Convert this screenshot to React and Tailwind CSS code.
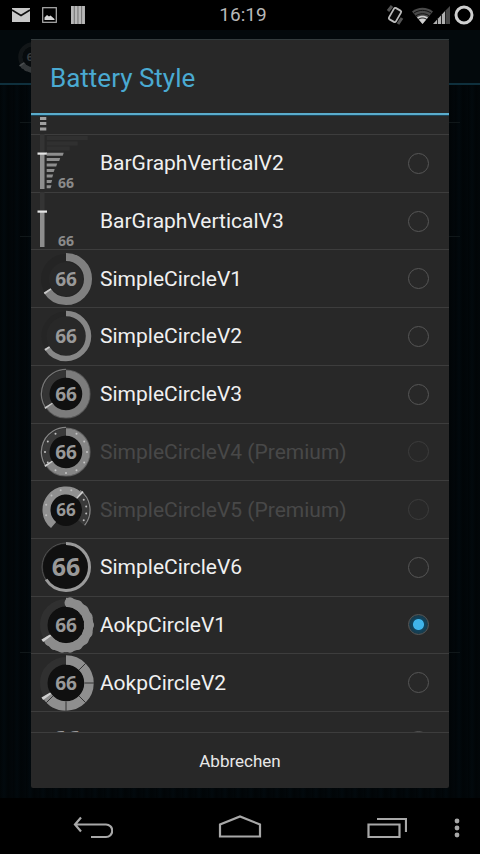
import React, { useState } from "react";

const Arc = ({ r, w, from = 0, length = 66, color = "#868686" }) => (
  <circle
    cx="30"
    cy="29"
    r={r}
    fill="none"
    stroke={color}
    strokeWidth={w}
    pathLength="100"
    strokeDasharray={`${length} ${100 - length}`}
    transform={`rotate(${from * 3.6 - 90} 30 29)`}
  />
);

const Level = ({ size = 19, x = 30, y = 36, color = "#999999" }) => (
  <text
    x={x}
    y={y}
    textAnchor="middle"
    fontSize={size}
    fontWeight="700"
    fill={color}
    fontFamily='"Open Sans", "Noto Sans", sans-serif'
  >
    66
  </text>
);

// Point on a circle round the icon centre, degrees clockwise from the top
const polar = (deg, r) => {
  const a = (deg * Math.PI) / 180;
  return { x: 30 + r * Math.sin(a), y: 29 - r * Math.cos(a) };
};

const Dots = ({ degrees, r, color }) =>
  degrees.map((deg) => {
    const p = polar(deg, r);
    return <circle key={deg} cx={p.x} cy={p.y} r="1" fill={color} />;
  });

const Stem = () => (
  <>
    <rect x="4" y="0" width="4.5" height="19" fill="#343434" />
    <rect x="4" y="20" width="4.5" height="35" fill="#8e8e8e" />
    <rect x="1.5" y="18.5" width="9.5" height="2.2" fill="#e6e6e6" />
  </>
);

const icons = {
  barV1: (
    <>
      {[41, 46, 51.5].map((y) => (
        <rect key={y} x="4" y={y} width="6.3" height="3" fill="#a0a0a0" />
      ))}
    </>
  ),
  barV2: (
    <>
      <Stem />
      {[
        [2, 41],
        [7.5, 31],
        [12.5, 23],
      ].map(([y, width]) => (
        <rect key={y} x="10.7" y={y} width={width} height="4" fill="#303030" />
      ))}
      {[
        [18.7, 17],
        [24, 13.5],
        [29.5, 10.5],
        [35, 8],
        [40.5, 6.5],
        [46, 5.5],
        [51.2, 4.8],
      ].map(([y, width]) => (
        <path
          key={y}
          d={`M10.7 ${y}h${width}l-1 3h${1 - width}z`}
          fill="#8e8e8e"
        />
      ))}
      <Level size={14} y={54} color="#8a8a8a" />
    </>
  ),
  barV3: (
    <>
      <Stem />
      <Level size={14} y={54} color="#8a8a8a" />
    </>
  ),
  simpleV1: (
    <>
      <Arc r={21} w={8} length={100} color="#242424" />
      <Arc r={22} w={8} color="#808080" />
      <Arc r={22} w={8} from={65} length={1.4} color="#c8c8c8" />
      <Level />
    </>
  ),
  simpleV2: (
    <>
      <Arc r={22} w={5} length={100} color="#252525" />
      <Arc r={22.5} w={5.5} />
      <Arc r={22.5} w={5.5} from={65} length={1.4} color="#c8c8c8" />
      <Level />
    </>
  ),
  simpleV3: (
    <>
      <Arc r={24} w={1.2} color="#555555" />
      <circle cx="30" cy="29" r="17" fill="#101010" />
      <Arc r={20} w={7} from={66} length={34} color="#343434" />
      <Arc r={24.6} w={1.3} from={66} length={34} color="#757575" />
      <Arc r={20} w={7.5} color="#7c7c7c" />
      <Arc r={21} w={9} from={65} length={1.2} color="#c8c8c8" />
      <Level />
    </>
  ),
  simpleV4: (
    <>
      <Arc r={24} w={1.2} color="#5d5d5d" />
      <circle cx="30" cy="29" r="17" fill="#101010" />
      <Arc r={20} w={7} from={66} length={34} color="#3a3a3a" />
      <Arc r={24.6} w={1.3} from={66} length={34} color="#858585" />
      <Arc r={20} w={7.5} color="#858585" />
      <Arc r={21} w={9} from={65} length={1.2} color="#d0d0d0" />
      <Dots
        degrees={[30, 60, 90, 120, 150, 180, 210, 240, 270, 300, 330]}
        r={21}
        color="#c4c4c4"
      />
      <Level />
    </>
  ),
  simpleV5: (
    <>
      <circle cx="30" cy="29" r="16" fill="#101010" />
      <Arc r={19.5} w={8} from={61} length={51} color="#909090" />
      <Arc r={24} w={1.3} from={10} length={26} color="#858585" />
      <Arc r={19.5} w={7} from={12} length={24} color="#3a3a3a" />
      <Arc r={20.5} w={9} from={11.3} length={1.2} color="#d0d0d0" />
      <Dots
        degrees={[-105, -75, -45, -15, 15, 60, 80, 100, 120]}
        r={20.5}
        color="#bdbdbd"
      />
      <Level size={17} y={35} />
    </>
  ),
  simpleV6: (
    <>
      <circle cx="30" cy="29" r="23" fill="#101010" />
      <Arc r={24} w={1} length={100} color="#505050" />
      <Arc r={23.5} w={3} color="#9a9a9a" />
      <Level size={25} y={38} />
    </>
  ),
  aokpV1: (
    <>
      <Arc r={22} w={8} length={100} color="#303030" />
      <circle cx="30" cy="29" r="18.5" fill="#101010" />
      <Arc r={22.8} w={9} color="#8c8c8c" />
      {[10, 30, 50, 70, 90, 110, 130, 150, 170, 190, 210, 226].map((deg) => {
        const p = polar(deg, 22.6);
        return <circle key={deg} cx={p.x} cy={p.y} r="5.4" fill="#8c8c8c" />;
      })}
      <circle cx="30" cy="29" r="18" fill="#101010" />
      <Arc r={23.5} w={10} from={64.8} length={1.8} color="#d0d0d0" />
      <Level />
    </>
  ),
  aokpV2: (
    <>
      <Arc r={22} w={8} length={100} color="#303030" />
      <circle cx="30" cy="29" r="18.5" fill="#101010" />
      <Arc r={23} w={9.5} color="#8f8f8f" />
      {[45, 90, 135, 180, 225].map((deg) => {
        const a = polar(deg, 18.5);
        const b = polar(deg, 28);
        return (
          <line
            key={deg}
            x1={a.x}
            y1={a.y}
            x2={b.x}
            y2={b.y}
            stroke="#333333"
            strokeWidth="1"
          />
        );
      })}
      <Arc r={23.5} w={10} from={64.8} length={1.8} color="#d0d0d0" />
      <Level />
    </>
  ),
  aokpV3: <Level size={25} y={37} />,
};

const styles = [
  { id: "barV2", name: "BarGraphVerticalV2" },
  { id: "barV3", name: "BarGraphVerticalV3" },
  { id: "simpleV1", name: "SimpleCircleV1" },
  { id: "simpleV2", name: "SimpleCircleV2" },
  { id: "simpleV3", name: "SimpleCircleV3" },
  { id: "simpleV4", name: "SimpleCircleV4 (Premium)", premium: true },
  { id: "simpleV5", name: "SimpleCircleV5 (Premium)", premium: true },
  { id: "simpleV6", name: "SimpleCircleV6" },
  { id: "aokpV1", name: "AokpCircleV1" },
  { id: "aokpV2", name: "AokpCircleV2" },
];

const StyleRow = ({ item, selected, onSelect }) => (
  <label
    className={`flex w-full shrink-0 items-center pl-[5px] pr-5 ${
      item.premium ? "text-[#484848]" : "text-[#f0f0f0]"
    }`}
  >
    <svg width="60" height="58" viewBox="0 0 60 58" className="shrink-0">
      {icons[item.id]}
    </svg>
    <span className="ml-1 flex-1 whitespace-nowrap text-[21px] leading-7">
      {item.name}
    </span>
    <input
      type="radio"
      name="battery-style"
      value={item.id}
      checked={selected === item.id}
      disabled={item.premium}
      onChange={() => onSelect(item.id)}
      className="size-[21px] shrink-0 appearance-none rounded-full border border-[#565656] checked:bg-[radial-gradient(circle,#3fb4ea_5px,#10445e_6px,#1c3946_10px)] disabled:border-[#3c3c3c]"
    />
  </label>
);

const StatusBar = () => (
  <header className="grid h-[30px] shrink-0 grid-cols-[1fr_auto_1fr] items-center bg-black pl-3 pr-1.5 text-[#b8b8b8]">
    <div className="flex items-center gap-3">
      <svg width="18" height="14" viewBox="0 0 18 14">
        <rect width="18" height="14" fill="#c8c8c8" />
        <path d="M0 2l9 5.5L18 2" fill="none" stroke="#111" strokeWidth="1.6" />
      </svg>
      <svg width="15" height="16" viewBox="0 0 15 16">
        <rect x=".7" y=".7" width="13.6" height="14.6" fill="none" stroke="#b0b0b0" strokeWidth="1.2" />
        <path d="M2.5 13V10.5l2.5-2.5 2 1.5 1.5-1 4 3.5V13z" fill="#d8d8d8" />
      </svg>
      <svg width="14" height="18" viewBox="0 0 14 18" className="ml-0.5">
        <path d="M0 0h14v18H0z" fill="#6a6a6a" />
        <path d="M0 0h2.8v18H0zM3.7 0h2.8v18H3.7zM7.4 0h2.8v18H7.4zM11.1 0h2.8v18h-2.8z" fill="#b8b8b8" />
      </svg>
    </div>
    <time className="text-[19px] leading-6">16:19</time>
    <div className="flex items-center justify-end">
      <svg width="18" height="20" viewBox="0 0 18 20" className="mr-2">
        <path d="M2 6l4-5M12 19l4-6" stroke="#555" strokeWidth="3" />
        <rect x="5" y="3.5" width="8" height="13" rx="1.5" transform="rotate(30 9 10)" fill="#0a0a0a" stroke="#bcbcbc" strokeWidth="1.8" />
      </svg>
      <svg width="21" height="17" viewBox="0 0 21 17">
        <path d="M10.5 17L0 4.5C6 -.5 15 -.5 21 4.5z" fill="#4a4a4a" />
        <path d="M10.5 17L5 10.5c3-2.5 8-2.5 11 0z" fill="#d0d0d0" />
        <path d="M2 6c5-3.500 12-3.500 17 0M3.500 9c4-3 10-3 14 0" fill="none" stroke="#111" strokeWidth="1" />
        <path d="M6 12.5c3-2 6-2 9 0" fill="none" stroke="#111" strokeWidth="1" />
      </svg>
      <svg width="17" height="18" viewBox="0 0 17 18">
        <path d="M0 18L13 4v14z" fill="#b0b0b0" />
        <path d="M13 4l4-4v18h-4z" fill="#484848" />
        <path d="M4.500 12v6M8.500 8v10M12.500 4v14" stroke="#222" strokeWidth="1" />
      </svg>
      <svg width="20" height="20" viewBox="0 0 20 20" className="ml-1">
        <circle cx="10" cy="10" r="8" fill="none" stroke="#cfcfcf" strokeWidth="3" />
      </svg>
    </div>
  </header>
);

const NavBar = () => (
  <nav className="flex h-14 shrink-0 items-center bg-black pl-[46px]">
    <div className="flex flex-1 items-center justify-between">
      <button aria-label="Back" className="flex h-14 w-[94px] items-center justify-center pt-1">
        <svg width="40" height="24" viewBox="0 0 40 24" fill="none" stroke="#a8a8a8" strokeWidth="2.2">
          <path d="M8 1.500L2 8.500l6 7M2 8.500h31a6 6 0 0 1 0 12.500H18" />
        </svg>
      </button>
      <button aria-label="Home" className="flex h-14 w-[94px] items-center justify-center pt-0.5">
        <svg width="44" height="24" viewBox="0 0 44 24" fill="none" stroke="#a8a8a8" strokeWidth="2.2">
          <path d="M2 21.500V9.500L22 1.500l20 8v12z" />
        </svg>
      </button>
      <button aria-label="Recent apps" className="flex h-14 w-[94px] items-center justify-center pt-1">
        <svg width="40" height="24" viewBox="0 0 40 24" fill="none" stroke="#a8a8a8" strokeWidth="2.2">
          <path d="M1.500 8.500h31V21h-31zM10 3h29v13" />
        </svg>
      </button>
    </div>
    <button aria-label="Menu" className="flex h-14 w-[46px] items-center justify-center pt-1">
      <svg width="6" height="22" viewBox="0 0 6 22" fill="#a8a8a8">
        <circle cx="3" cy="4" r="2.4" />
        <circle cx="3" cy="11" r="2.4" />
        <circle cx="3" cy="18" r="2.4" />
      </svg>
    </button>
  </nav>
);

const App = () => {
  const [selected, setSelected] = useState("aokpV1");

  return (
    <div className="flex h-screen min-h-[640px] flex-col bg-black font-[Roboto,sans-serif]">
      <StatusBar />

      <main className="grid min-h-0 flex-1 grid-cols-1 grid-rows-1 bg-[repeating-linear-gradient(90deg,#010507_0px,#02090d_4px,#010507_8px,#02070a_13px)]">
        {/* Dimmed settings screen */}
        <div className="col-start-1 row-start-1">
          <div className="flex h-[55px] items-center border-b-2 border-[#0f303d] bg-[#03090c] pl-4">
            <svg width="34" height="34" viewBox="0 0 60 58" opacity="0.35">
              {icons.aokpV1}
            </svg>
          </div>
          <div className="mx-5">
            <div className="h-[38px] border-b border-[#101719]" />
            <div className="h-[114px] border-b border-[#101719]" />
            <div className="h-[416px] border-b border-[#101719]" />
          </div>
        </div>

        {/* Dialog */}
        <section
          role="dialog"
          aria-labelledby="dialog-title"
          className="relative z-10 col-start-1 row-start-1 mx-[31px] mb-[10px] mt-[9px] flex min-h-0 flex-col rounded-xs bg-[#282828]"
        >
          <h1
            id="dialog-title"
            className="flex h-[74px] shrink-0 items-center border-t border-[#333b3d] px-[19px] pt-0.5 text-[26px] leading-8 text-[#4aaad2]"
          >
            Battery Style
          </h1>
          <div className="h-[3px] shrink-0 border-b border-[#1d4558] bg-[#5aaccc]" />

          <ul className="flex min-h-0 flex-1 flex-col overflow-hidden">
            <li className="flex h-[18px] shrink-0 items-end overflow-hidden">
              <StyleRow
                item={{ id: "barV1", name: "BarGraphVerticalV1" }}
                selected={selected}
                onSelect={setSelected}
              />
            </li>
            {styles.map((item) => (
              <li
                key={item.id}
                className="flex min-h-0 flex-1 items-center border-t border-[#3d3d3d]"
              >
                <StyleRow item={item} selected={selected} onSelect={setSelected} />
              </li>
            ))}
            <li className="flex h-[21px] shrink-0 items-start overflow-hidden border-t border-[#3d3d3d]">
              <StyleRow
                item={{ id: "aokpV3", name: "" }}
                selected={selected}
                onSelect={setSelected}
              />
            </li>
          </ul>

          <button className="h-14 shrink-0 border-t border-[#3d3d3d] text-[17px] leading-6 text-[#e8e8e8]">
            Abbrechen
          </button>
        </section>
      </main>

      <NavBar />
    </div>
  );
};

export default App;
